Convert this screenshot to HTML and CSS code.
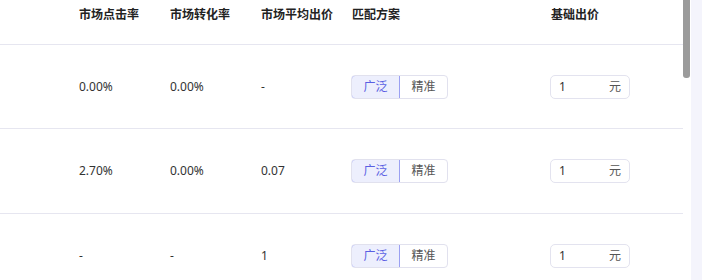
FILE: index.html
```html
<!DOCTYPE html>
<html lang="zh-CN">
<head>
    <meta charset="UTF-8">
    <title>关键词出价</title>
    <link rel="stylesheet" href="styles.css">
</head>
<body>
    <div class="page">
        <div class="table">
            <div class="row head">
                <div></div>
                <div>市场点击率</div>
                <div>市场转化率</div>
                <div>市场平均出价</div>
                <div>匹配方案</div>
                <div>基础出价</div>
            </div>
            <div class="row">
                <div></div>
                <div>0.00%</div>
                <div>0.00%</div>
                <div>-</div>
                <div>
                    <div class="seg"><span class="on">广泛</span><span>精准</span></div>
                </div>
                <div>
                    <div class="price"><span>1</span><span class="unit">元</span></div>
                </div>
            </div>
            <div class="row">
                <div></div>
                <div>2.70%</div>
                <div>0.00%</div>
                <div>0.07</div>
                <div>
                    <div class="seg"><span class="on">广泛</span><span>精准</span></div>
                </div>
                <div>
                    <div class="price"><span>1</span><span class="unit">元</span></div>
                </div>
            </div>
            <div class="row">
                <div></div>
                <div>-</div>
                <div>-</div>
                <div>1</div>
                <div>
                    <div class="seg"><span class="on">广泛</span><span>精准</span></div>
                </div>
                <div>
                    <div class="price"><span>1</span><span class="unit">元</span></div>
                </div>
            </div>
        </div>
        <div class="track"><div class="thumb"></div></div>
        <div class="side"></div>
    </div>
</body>
</html>
```

FILE: styles.css
```css
body {
    margin: 0;
    font-family: "Noto Sans", "Noto Sans CJK SC", sans-serif;
    font-size: 12px;
    color: #333;
    background: #fff;
}
.page {
    display: flex;
    width: 702px;
    height: 280px;
    overflow: hidden;
}
.table {
    width: 683px;
    flex: none;
}
.row {
    display: grid;
    grid-template-columns: 79px 91px 91px 91px 199px 1fr;
    align-items: center;
    height: 84px;
    border-bottom: 1px solid #e6e6f0;
    line-height: 16px;
}
.row:nth-child(2) {
    height: 83px;
}
.row.head {
    height: 44px;
    align-items: start;
    font-weight: bold;
    color: #222;
}
.row.head > div {
    padding-top: 7px;
}
.seg {
    display: inline-flex;
    height: 24px;
    margin-left: -1px;
    border: 1px solid #e1e1ee;
    border-radius: 4px;
    box-sizing: border-box;
    overflow: hidden;
}
.seg span {
    width: 47px;
    display: flex;
    align-items: center;
    justify-content: center;
    color: #555;
}
.seg .on {
    background: #edeffd;
    color: #5a5fe3;
    border: 1px solid #9ba0f2;
    margin: -1px 0 -1px -1px;
    border-radius: 4px 0 0 4px;
}
.price {
    display: flex;
    justify-content: space-between;
    align-items: center;
    width: 80px;
    height: 24px;
    margin-left: -1px;
    box-sizing: border-box;
    padding: 0 8px;
    border: 1px solid #e3e3ef;
    border-radius: 5px;
}
.price .unit {
    color: #555;
}
.track {
    width: 8px;
    flex: none;
    background: #fff;
}
.thumb {
    width: 7px;
    height: 78px;
    background: #9b9b9b;
    border-radius: 0 0 3px 3px;
}
.side {
    flex: 1;
    background: #f4f4fc;
}
```
